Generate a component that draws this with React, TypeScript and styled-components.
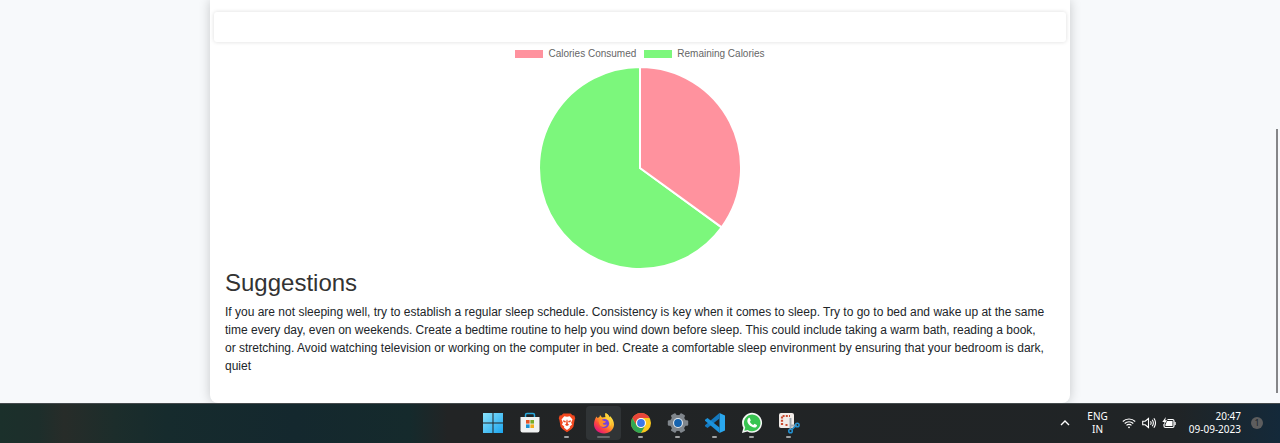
import React from "react";
import styled, { createGlobalStyle } from "styled-components";

const GlobalStyle = createGlobalStyle`
  *, *::before, *::after { box-sizing: border-box; }
  body {
    margin: 0;
    background: #f7f9fb;
    font-family: "Liberation Sans", Arial, sans-serif;
    color: #212529;
  }
`;

const Screen = styled.div`
  position: relative;
  display: flex;
  flex-direction: column;
  min-height: 100vh;
`;

const Page = styled.main`
  flex: 1;
  display: flex;
  justify-content: center;
  overflow: hidden;
`;

const Card = styled.section`
  width: 100%;
  max-width: 860px;
  padding: 12px 3px 28px;
  background: #fff;
  border-radius: 0 0 8px 8px;
  box-shadow: 0 0 12px rgba(0, 0, 0, 0.2);
`;

const Panel = styled.div`
  height: 30px;
  margin: 0 1px;
  border-radius: 3px;
  background: #fff;
  box-shadow: 0 0 4px rgba(0, 0, 0, 0.14);
`;

const Chart = styled.figure`
  display: flex;
  flex-direction: column;
  align-items: center;
  margin: 6px 0 0;
`;

const Legend = styled.figcaption`
  display: flex;
  gap: 8px;
  margin-bottom: 7px;
`;

const LegendItem = styled.span`
  display: flex;
  align-items: center;
  gap: 5px;
  font-size: 10px;
  line-height: 12px;
  color: #666;
`;

const Swatch = styled.span<{ $color: string }>`
  width: 28px;
  height: 8px;
  background: ${(p) => p.$color};
`;

const Pie = styled.svg`
  display: block;
  width: 202px;
  height: 202px;
`;

const Suggestions = styled.div`
  padding: 0 20px 0 12px;
`;

const Title = styled.h2`
  margin: 0 0 6px;
  font-size: 24px;
  font-weight: 400;
  line-height: 28px;
  color: #333;
`;

const Advice = styled.p`
  margin: 0;
  font-size: 12px;
  line-height: 18px;
`;

const ScrollThumb = styled.div`
  position: absolute;
  top: 129px;
  right: 2px;
  bottom: 50px;
  width: 2px;
  background: #858688;
`;

const Taskbar = styled.footer`
  display: grid;
  grid-template-columns: 1fr auto 1fr;
  height: 40px;
  border-top: 1px solid #454b4d;
  color: #fff;
  font-family: "Noto Sans", "Open Sans", sans-serif;
  background: linear-gradient(
    90deg,
    #1b302b 0%,
    #1d2e2b 3%,
    #272c29 5%,
    #1c2d2b 9%,
    #162b2d 13%,
    #14282e 23%,
    #152a2c 32%,
    #222425 35%,
    #202426 92%,
    #1b262d 95%,
    #14293a 100%
  );
`;

const Apps = styled.nav`
  grid-column: 2;
  display: flex;
  align-items: flex-start;
  padding: 2px 0 0 1px;
`;

const AppButton = styled.button<{ $active?: boolean; $running?: boolean }>`
  display: flex;
  flex-direction: column;
  align-items: center;
  justify-content: space-between;
  width: 35px;
  height: 34px;
  margin: 0 1px;
  padding: 6px 0 2px;
  border: 0;
  border-radius: 4px;
  background: ${(p) => (p.$active ? "#303436" : "transparent")};

  svg {
    width: 22px;
    height: 22px;
  }

  &::after {
    content: "";
    width: ${(p) => (p.$active ? "13px" : "5px")};
    height: 2px;
    border-radius: 1px;
    background: ${(p) => (p.$active ? "#66696b" : p.$running ? "#a0a2a3" : "transparent")};
  }
`;

const Tray = styled.div`
  grid-column: 3;
  display: flex;
  align-items: center;
  justify-content: flex-end;
  padding: 0 17px 2px 0;
`;

const TrayButton = styled.button<{ $align?: string; $gap?: number }>`
  display: flex;
  flex-direction: ${(p) => (p.$align ? "column" : "row")};
  align-items: ${(p) => p.$align ?? "center"};
  gap: ${(p) => (p.$align ? "0" : "6px")};
  margin: 0 ${(p) => p.$gap ?? 0}px 0 0;
  padding: 0;
  border: 0;
  background: none;
  color: inherit;
  font: 10px/13px "Noto Sans", "Open Sans", sans-serif;
`;

const Count = styled.span`
  width: 12px;
  height: 12px;
  border-radius: 50%;
  background: #5d5d5e;
  color: #1b262d;
  font-size: 9px;
  line-height: 12px;
  text-align: center;
`;

const WindowsIcon = () => (
  <svg viewBox="0 0 22 22">
    <defs>
      <linearGradient id="win" x1="0" y1="0" x2="1" y2="1">
        <stop offset="0" stopColor="#8be2fb" />
        <stop offset="1" stopColor="#1ba5ee" />
      </linearGradient>
    </defs>
    <path fill="url(#win)" d="M1 1h9.5v9.5H1zM11.5 1H21v9.5h-9.5zM1 11.5h9.5V21H1zM11.5 11.5H21V21h-9.5z" />
  </svg>
);

const StoreIcon = () => (
  <svg viewBox="0 0 22 22">
    <path d="M6.500 5V3q0-1.500 1.500-1.500h6Q15.500 1.500 15.500 3v2" fill="none" stroke="#2ba9dc" strokeWidth="1.500" />
    <path d="M1.500 5h19v13.500q0 2-2 2h-15q-2 0-2-2z" fill="#f1f2f2" />
    <path d="M7 8h3.600v3.600H7z" fill="#e65325" />
    <path d="M11.400 8H15v3.600h-3.600z" fill="#78ad28" />
    <path d="M7 12.400h3.600V16H7z" fill="#1b91d2" />
    <path d="M11.400 12.400H15V16h-3.600z" fill="#f2ae1c" />
  </svg>
);

const BraveIcon = () => (
  <svg viewBox="-1 0 24 23">
    <path d="M7 1h8l2 2 2 .3 1 3-.7 2-1.300 7.200L16 18l-5 3.500L6 18l-2-2.500L2.700 8.300 2 6.300l1-3L5 3z" fill="#f1481f" />
    <path d="m11 4.800 3-.6 3 3.500-1.500 3.500 1 1.800-2.500 2.200.2 1.500-3.200 2.300-3.200-2.300.2-1.500-2.500-2.200 1-1.800L5 7.700l3-3.500z" fill="#fff" />
    <path d="m6.500 8.500 3.300.8-.6 1.700-2-.7zM15.500 8.500l-3.300.8.6 1.700 2-.7zM10.500 8h1l.5 4.500 1.500 1-2.500 1.300-2.500-1.300 1.500-1z" fill="#f1481f" />
  </svg>
);

const FirefoxIcon = () => (
  <svg viewBox="0 0 22 22">
    <defs>
      <linearGradient id="fox" x1=".85" y1=".1" x2=".2" y2=".9">
        <stop offset="0" stopColor="#fff04a" />
        <stop offset=".4" stopColor="#ffad28" />
        <stop offset=".7" stopColor="#ff5138" />
        <stop offset="1" stopColor="#e41877" />
      </linearGradient>
    </defs>
    <path d="M3.500 4.500 4.500 6l2-1 .5-2 2 2.500 4-.500L12.500 1c2.500 1 3.500 3 4 4.500l.5-1.500c2.500 2.500 4 5.500 4 8.500 0 5-4.500 9-10 9s-10-4-10-9c0-3 1-6 2.500-8z" fill="url(#fox)" />
    <circle cx="11.500" cy="11.500" r="4.600" fill="#7542dc" />
    <path d="M5.500 8.500c2-1.500 4-.500 5.500.5l2 .5c-.5 1.300-1.500 1.300-2.500 1.600-1 .8-.5 1.600 1 1.600 1 0 1.600-.4 2.500-.2-1 2.600-4.200 3.200-6.500 1.400C6 12.500 6 10.500 5.500 8.500z" fill="#ff8b2b" />
    <path d="M12.500 1c2.500 1 3.500 3 4 4.500 2 2 2.500 6 .5 9 .5-5-1-6-3-7.500-1.500-1.200-2.500-3.500-1.500-6z" fill="#ffd13b" />
  </svg>
);

const ChromeIcon = () => (
  <svg viewBox="0 0 22 22">
    <circle cx="11" cy="11" r="10" fill="#fbc91d" />
    <path d="M2.340 6A10 10 0 0 1 19.660 6H11a5 5 0 0 0-4.330 7.500z" fill="#e8453a" />
    <path d="M2.340 6A10 10 0 0 0 11 21l4.330-7.500a5 5 0 0 1-8.660 0z" fill="#32a653" />
    <circle cx="11" cy="11" r="5" fill="#fff" />
    <circle cx="11" cy="11" r="3.900" fill="#3c78e7" />
  </svg>
);

const SettingsIcon = () => (
  <svg viewBox="0 0 22 22">
    <g fill="#80868c">
      <circle cx="11" cy="11" r="8" />
      {[30, 90, 150].map((angle) => (
        <rect key={angle} x="8.300" y="0.800" width="5.400" height="20.400" rx="1.200" transform={`rotate(${angle} 11 11)`} />
      ))}
    </g>
    <circle cx="11" cy="11" r="5" fill="#e3eaf0" />
    <circle cx="11" cy="11" r="3.900" fill="#1663ae" />
  </svg>
);

const CodeIcon = () => (
  <svg viewBox="0 0 22 22">
    <path d="M15.500 1 21 3.500v15L15.500 21z" fill="#2aa7ee" />
    <path d="M15.500 1v5.500L3.500 16 1 14.300v-1z" fill="#1479c0" />
    <path d="M15.500 21v-5.500L3.500 6 1 7.700v1z" fill="#1c92db" />
  </svg>
);

const WhatsAppIcon = () => (
  <svg viewBox="0 0 22 22">
    <path d="M1 21l1.400-5.200A10 10 0 1 1 6.300 19.600z" fill="#f4f7f5" />
    <path d="M3.300 18.700l.9-3.300a8.300 8.300 0 1 1 2.500 2.500z" fill="#38c451" />
    <path d="M7.400 6.200c.5-.5 1.200-.4 1.500.1l.8 1.900c.1.600-.5 1-.9 1.500.8 1.600 2 2.600 3.600 3.300l1.100-1.200 2.300 1.100c.3.300.2 1.200-.3 1.800-1.300 1.300-3.200.9-5-.1-2-1.200-3.600-3-4.100-4.900-.2-1.300.2-2.700 1-3.500z" fill="#fff" />
  </svg>
);

const SnippingIcon = () => (
  <svg viewBox="0 0 22 22">
    <rect x="1" y="1" width="15" height="15" rx="2" fill="#f0ebe8" />
    <path d="M4 13V4h8" fill="none" stroke="#c84b31" strokeWidth="2.200" strokeDasharray="2 1.200" />
    <path d="M7.500 13h2" stroke="#c84b31" strokeWidth="2" />
    <path d="M12.500 6v7.500h6M12.500 13.500v3.500" fill="none" stroke="#9ea6ad" strokeWidth="1.900" />
    <circle cx="19.300" cy="13" r="1.800" fill="none" stroke="#2393d4" strokeWidth="1.500" />
    <circle cx="12.500" cy="19" r="1.800" fill="none" stroke="#2393d4" strokeWidth="1.500" />
    <path d="m14 17.500 3.500-3.500" stroke="#2393d4" strokeWidth="1.500" />
  </svg>
);

const apps = [
  { name: "Start", Icon: WindowsIcon },
  { name: "Microsoft Store", Icon: StoreIcon },
  { name: "Brave", Icon: BraveIcon, running: true },
  { name: "Firefox", Icon: FirefoxIcon, running: true, active: true },
  { name: "Chrome", Icon: ChromeIcon, running: true },
  { name: "Settings", Icon: SettingsIcon, running: true },
  { name: "Visual Studio Code", Icon: CodeIcon, running: true },
  { name: "WhatsApp", Icon: WhatsAppIcon, running: true },
  { name: "Snipping Tool", Icon: SnippingIcon, running: true },
];

const CONSUMED = "#ff929e";
const REMAINING = "#7cf77c";

export default function App() {
  return (
    <Screen>
      <GlobalStyle />
      <Page>
        <Card>
          <Panel />
          <Chart>
            <Legend>
              <LegendItem>
                <Swatch $color={CONSUMED} />
                Calories Consumed
              </LegendItem>
              <LegendItem>
                <Swatch $color={REMAINING} />
                Remaining Calories
              </LegendItem>
            </Legend>
            <Pie viewBox="0 0 202 202" role="img" aria-label="Calories consumed and remaining">
              <g stroke="#fff" strokeWidth="2" strokeLinejoin="round">
                <path fill={REMAINING} d="M101 101L182.700 160.400A101 101 0 1 1 101 0z" />
                <path fill={CONSUMED} d="M101 101V0A101 101 0 0 1 182.700 160.400z" />
              </g>
            </Pie>
          </Chart>
          <Suggestions>
            <Title>Suggestions</Title>
            <Advice>
              If you are not sleeping well, try to establish a regular sleep schedule. Consistency is key when it
              comes to sleep. Try to go to bed and wake up at the same time every day, even on weekends. Create a
              bedtime routine to help you wind down before sleep. This could include taking a warm bath, reading a
              book, or stretching. Avoid watching television or working on the computer in bed. Create a comfortable
              sleep environment by ensuring that your bedroom is dark, quiet
            </Advice>
          </Suggestions>
        </Card>
      </Page>
      <ScrollThumb />
      <Taskbar>
        <Apps aria-label="Apps">
          {apps.map(({ name, Icon, running, active }) => (
            <AppButton key={name} aria-label={name} $running={running} $active={active}>
              <Icon />
            </AppButton>
          ))}
        </Apps>
        <Tray>
          <TrayButton $gap={17} aria-label="Show hidden icons">
            <svg width="10" height="10" viewBox="0 0 10 10" fill="none" stroke="#fff" strokeWidth="1.400">
              <path d="M1 7l4-4 4 4" />
            </svg>
          </TrayButton>
          <TrayButton $gap={14} $align="center">
            <span>ENG</span>
            <span>IN</span>
          </TrayButton>
          <TrayButton $gap={13} aria-label="Network, sound and battery">
            <svg width="14" height="14" viewBox="0 0 14 14" fill="none" stroke="#fff" strokeWidth="1.100">
              <path d="M.8 5.500a8.800 8.800 0 0 1 12.400 0M2.700 7.500a6.100 6.100 0 0 1 8.600 0M4.500 9.400a3.500 3.500 0 0 1 5 0" />
              <circle cx="7" cy="11.300" r=".9" fill="#fff" stroke="none" />
            </svg>
            <svg width="14" height="14" viewBox="0 0 14 14" fill="none" stroke="#fff" strokeWidth="1.100">
              <path d="M.7 5.200h2.500L6.500 2.500v9L3.200 8.800H.7zM8.500 5.200q1.300 1.800 0 3.600M10.200 3.700q2.300 3.300 0 6.600M11.900 2.300q3.200 4.700 0 9.400" />
            </svg>
            <svg width="14" height="14" viewBox="0 0 14 14">
              <path d="M5.500 3.500h5q1.500 0 1.500 1.500v5q0 1.500-1.500 1.500h-7Q2 11.500 2 10V8" fill="none" stroke="#fff" strokeWidth="1.200" />
              <path d="M5 5h5.500v5h-7V8.500zM12.500 6h1.200v3h-1.200zM3.800 1 .3 6h2.200L1.800 9 5 4.300H3.200z" fill="#fff" />
            </svg>
          </TrayButton>
          <TrayButton $gap={10} $align="flex-end">
            <span>20:47</span>
            <span>09-09-2023</span>
          </TrayButton>
          <Count>1</Count>
        </Tray>
      </Taskbar>
    </Screen>
  );
}
